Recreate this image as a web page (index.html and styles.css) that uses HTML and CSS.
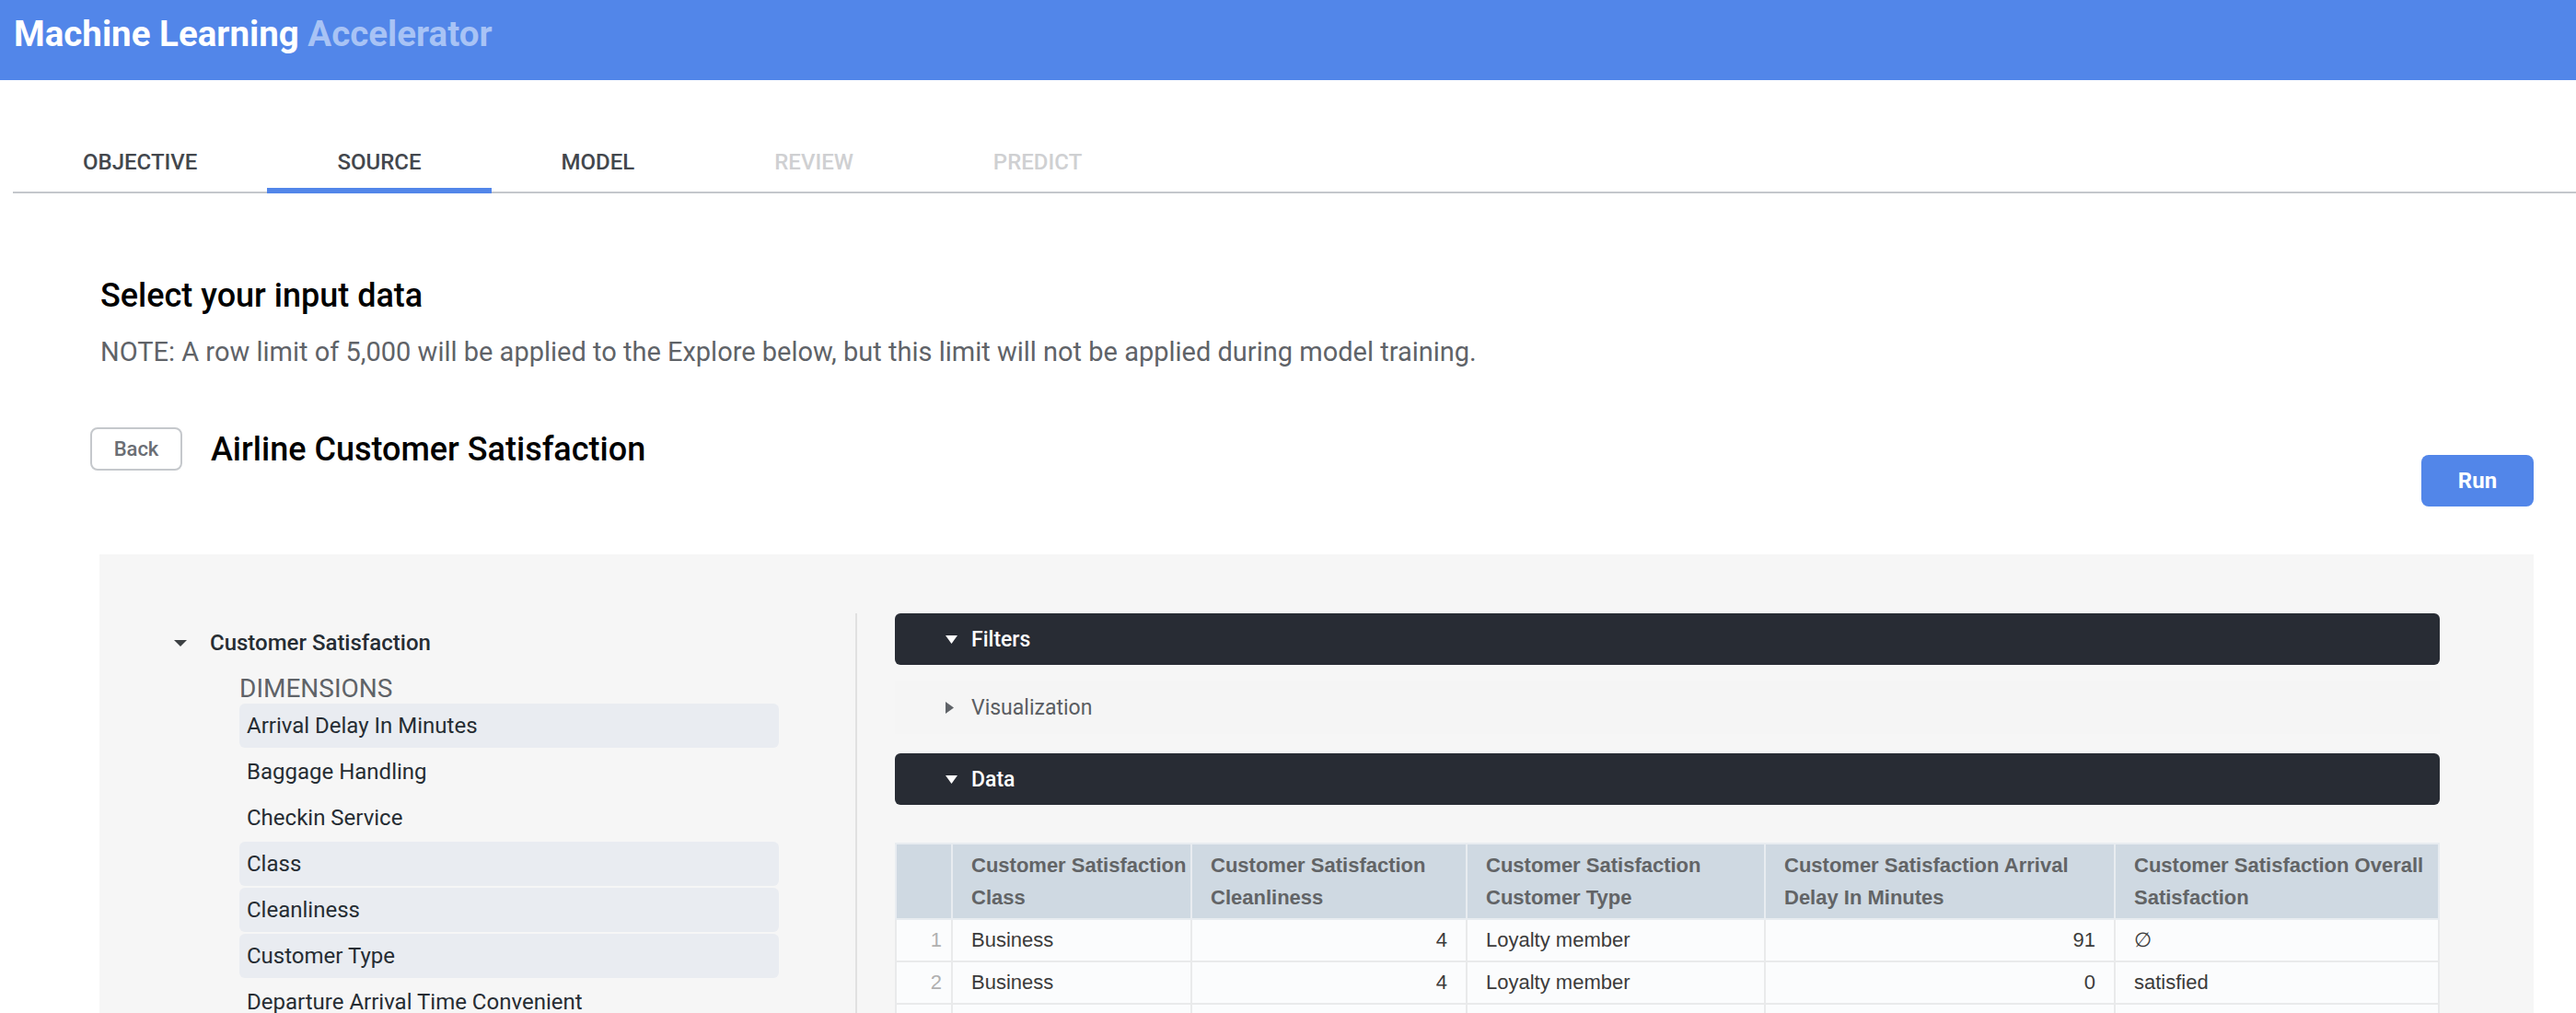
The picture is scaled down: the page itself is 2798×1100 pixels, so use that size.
FILE: index.html
```html
<!DOCTYPE html>
<html lang="en">
<head>
<meta charset="utf-8">
<title>Machine Learning Accelerator</title>
<link rel="stylesheet" href="styles.css">
</head>
<body>
<header class="appbar">
  <div class="brand"><span class="brand-main">Machine Learning</span> <span class="brand-sub">Accelerator</span></div>
</header>

<nav class="tabs">
  <div class="tab">OBJECTIVE</div>
  <div class="tab active">SOURCE</div>
  <div class="tab">MODEL</div>
  <div class="tab disabled">REVIEW</div>
  <div class="tab disabled">PREDICT</div>
</nav>

<main class="content">
  <section class="intro">
    <h2 class="page-title">Select your input data</h2>
    <p class="note">NOTE: A row limit of 5,000 will be applied to the Explore below, but this limit will not be applied during model training.</p>
  </section>

  <div class="explore-head">
    <div class="explore-title">
      <button class="btn-back">Back</button>
      <h3 class="explore-name">Airline Customer Satisfaction</h3>
    </div>
    <button class="btn-run">Run</button>
  </div>

  <section class="panel">
    <aside class="fields">
      <div class="view-head">
        <svg class="caret-tree" width="14" height="7" viewBox="0 0 14 7"><polygon points="0,0 14,0 7,7" fill="#3c4043"/></svg>
        <span>Customer Satisfaction</span>
      </div>
      <div class="group-label">DIMENSIONS</div>
      <ul class="field-list">
        <li class="field selected">Arrival Delay In Minutes</li>
        <li class="field">Baggage Handling</li>
        <li class="field">Checkin Service</li>
        <li class="field selected">Class</li>
        <li class="field selected">Cleanliness</li>
        <li class="field selected">Customer Type</li>
        <li class="field">Departure Arrival Time Convenient</li>
        <li class="field">Departure Delay In Minutes</li>
        <li class="field">Ease Of Online Booking</li>
      </ul>
    </aside>

    <div class="results">
      <div class="bar">
        <svg class="caret" width="13" height="9" viewBox="0 0 13 9"><polygon points="0,0 13,0 6.5,9" fill="#ffffff"/></svg>
        <span>Filters</span>
      </div>
      <div class="bar-light">
        <svg class="caret" width="9" height="13" viewBox="0 0 9 13"><polygon points="0,0 9,6.5 0,13" fill="#5f6368"/></svg>
        <span>Visualization</span>
      </div>
      <div class="bar">
        <svg class="caret" width="13" height="9" viewBox="0 0 13 9"><polygon points="0,0 13,0 6.5,9" fill="#ffffff"/></svg>
        <span>Data</span>
      </div>

      <table class="grid">
        <colgroup>
          <col class="w-num"><col class="w-class"><col class="w-clean"><col class="w-type"><col class="w-delay"><col class="w-overall">
        </colgroup>
        <thead>
          <tr>
            <th></th>
            <th>Customer Satisfaction Class</th>
            <th>Customer Satisfaction Cleanliness</th>
            <th>Customer Satisfaction Customer Type</th>
            <th>Customer Satisfaction Arrival Delay In Minutes</th>
            <th>Customer Satisfaction Overall Satisfaction</th>
          </tr>
        </thead>
        <tbody>
          <tr><td class="num">1</td><td>Business</td><td class="r">4</td><td>Loyalty member</td><td class="r">91</td><td>∅</td></tr>
          <tr><td class="num">2</td><td>Business</td><td class="r">4</td><td>Loyalty member</td><td class="r">0</td><td>satisfied</td></tr>
          <tr><td class="num">3</td><td>Business</td><td class="r">3</td><td>Loyalty member</td><td class="r">0</td><td>satisfied</td></tr>
        </tbody>
      </table>
    </div>
  </section>
</main>
</body>
</html>
```

FILE: styles.css
```css
* { box-sizing: border-box; }

html, body {
  margin: 0;
  padding: 0;
  background: #ffffff;
  font-family: Roboto, "Noto Sans", "Liberation Sans", sans-serif;
  overflow: hidden;
}

/* App bar */
.appbar {
  height: 87px;
  background: #5286e9;
  padding: 18px 0 0 15px;
}
.brand {
  font-size: 38.5px;
  line-height: 38px;
  font-weight: 700;
}
.brand-main { color: #ffffff; }
.brand-sub { color: #a8c3f5; }

/* Tabs */
.tabs {
  display: flex;
  margin: 61px 0 0 14px;
  border-bottom: 2px solid #c4c7cc;
}
.tab {
  height: 62px;
  padding: 0 76px;
  margin-bottom: -2px;
  border-bottom: 6px solid transparent;
  display: flex;
  align-items: center;
  font-size: 24px;
  font-weight: 500;
  color: #43474d;
}
.tab.active { border-bottom-color: #5286e9; }
.tab.disabled { color: #cfd0d2; }

/* Main content */
.content {
  padding: 0 46px 0 98px;
}
.intro { padding-left: 11px; }
.page-title {
  margin: 90px 0 0;
  font-size: 36px;
  line-height: 42px;
  font-weight: 500;
  color: #000000;
}
.note {
  margin: 23px 0 0;
  font-size: 29px;
  line-height: 34px;
  color: #5f6368;
}

.explore-head {
  display: flex;
  justify-content: space-between;
  align-items: flex-start;
  margin-top: 65px;
}
.explore-title {
  display: flex;
  align-items: center;
  gap: 31px;
}
.btn-back {
  width: 100px;
  height: 47px;
  border: 2px solid #c5c8cc;
  border-radius: 8px;
  background: #ffffff;
  font-family: Roboto, "Liberation Sans", sans-serif;
  font-size: 22px;
  font-weight: 500;
  color: #6a6e74;
  padding: 0;
}
.explore-name {
  margin: 0;
  font-size: 36px;
  line-height: 44px;
  font-weight: 500;
  color: #000000;
}
.btn-run {
  margin-top: 30px;
  width: 122px;
  height: 56px;
  border: none;
  border-radius: 8px;
  background: #5286e9;
  color: #ffffff;
  font-family: Roboto, "Liberation Sans", sans-serif;
  font-size: 24px;
  font-weight: 700;
  padding: 0;
}

/* Explore panel */
.panel {
  margin: 52px 0 0 10px;
  background: #f6f6f6;
  display: flex;
  align-items: stretch;
  padding-top: 64px;
  min-height: 700px;
}
.fields {
  width: 821px;
  flex: none;
  padding-left: 81px;
  padding-top: 2px;
}
.view-head {
  display: flex;
  align-items: center;
  height: 60px;
  font-size: 24px;
  font-weight: 500;
  color: #262d33;
}
.caret-tree { margin-right: 25px; flex: none; }
.group-label {
  margin: 3px 0 0 71px;
  font-size: 28px;
  line-height: 33px;
  color: #5f6368;
}
.field-list {
  list-style: none;
  margin: 0 0 0 71px;
  padding: 0;
  width: 586px;
}
.field {
  height: 48px;
  margin-bottom: 2px;
  padding-left: 8px;
  border-radius: 6px;
  display: flex;
  align-items: center;
  font-size: 24px;
  color: #262d33;
}
.field.selected { background: #e9ecf1; }

.results {
  flex: 1;
  border-left: 2px solid #e1e1e1;
  padding: 0 104px 0 41px;
}
.bar, .bar-light {
  display: flex;
  align-items: center;
  padding-left: 55px;
  font-size: 23px;
}
.bar {
  height: 56px;
  background: #282c34;
  border-radius: 6px;
  color: #ffffff;
  font-weight: 500;
}
.bar-light {
  height: 57px;
  margin: 18px 0 21px;
  background: #f5f5f5;
  color: #5a5d62;
}
.caret { flex: none; margin-right: 15px; }
.bar-light .caret { margin-right: 19px; }

/* Data grid */
.grid {
  margin-top: 41px;
  width: 1676px;
  table-layout: fixed;
  border-collapse: collapse;
  font-family: "Liberation Sans", Arial, Helvetica, sans-serif;
  font-size: 22px;
}
.w-num { width: 61px; }
.w-class { width: 260px; }
.w-clean { width: 299px; }
.w-type { width: 324px; }
.w-delay { width: 380px; }
.w-overall { width: 352px; }

.grid th {
  background: #cfd9e2;
  border: 2px solid #e8ecf0;
  padding: 5px 0 5px 20px;
  line-height: 35px;
  text-align: left;
  vertical-align: top;
  font-weight: 700;
  color: #626466;
}
.grid td {
  height: 46px;
  background: #fbfcfd;
  border: 2px solid #e9eaeb;
  padding: 0 20px;
  color: #3b3b3b;
  white-space: nowrap;
}
.grid td.r { text-align: right; }
.grid td.num {
  text-align: right;
  padding: 0 10px 0 0;
  color: #b0b0b0;
}
```
